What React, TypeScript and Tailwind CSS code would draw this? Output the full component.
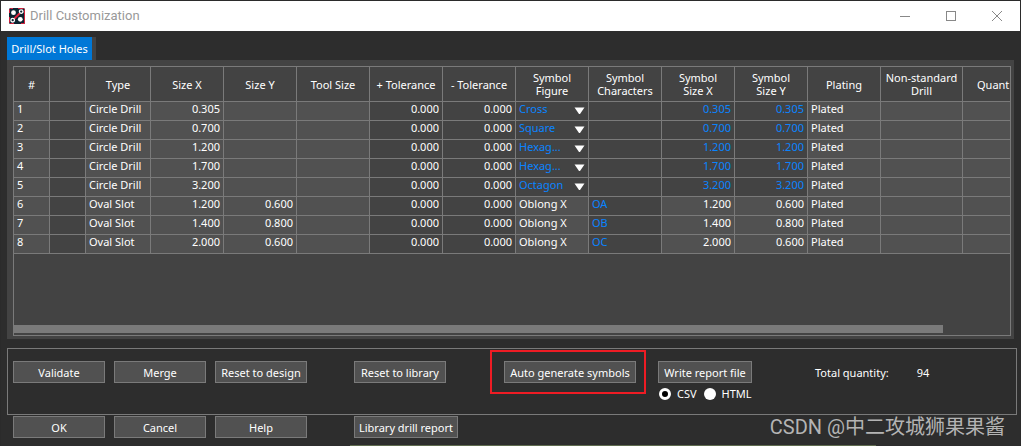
import React, { useState } from "react";

type Row = {
  type: string;
  sizeX: string;
  sizeY: string;
  figure: string;
  chars: string;
  symX: string;
  symY: string;
  editable: boolean;
};

const rows: Row[] = [
  { type: "Circle Drill", sizeX: "0.305", sizeY: "", figure: "Cross", chars: "", symX: "0.305", symY: "0.305", editable: true },
  { type: "Circle Drill", sizeX: "0.700", sizeY: "", figure: "Square", chars: "", symX: "0.700", symY: "0.700", editable: true },
  { type: "Circle Drill", sizeX: "1.200", sizeY: "", figure: "Hexag...", chars: "", symX: "1.200", symY: "1.200", editable: true },
  { type: "Circle Drill", sizeX: "1.700", sizeY: "", figure: "Hexag...", chars: "", symX: "1.700", symY: "1.700", editable: true },
  { type: "Circle Drill", sizeX: "3.200", sizeY: "", figure: "Octagon", chars: "", symX: "3.200", symY: "3.200", editable: true },
  { type: "Oval Slot", sizeX: "1.200", sizeY: "0.600", figure: "Oblong X", chars: "OA", symX: "1.200", symY: "0.600", editable: false },
  { type: "Oval Slot", sizeX: "1.400", sizeY: "0.800", figure: "Oblong X", chars: "OB", symX: "1.400", symY: "0.800", editable: false },
  { type: "Oval Slot", sizeX: "2.000", sizeY: "0.600", figure: "Oblong X", chars: "OC", symX: "2.000", symY: "0.600", editable: false },
];

const headers = [
  "#", "", "Type", "Size X", "Size Y", "Tool Size", "+ Tolerance", "- Tolerance",
  "Symbol\nFigure", "Symbol\nCharacters", "Symbol\nSize X", "Symbol\nSize Y", "Plating", "Non-standard\nDrill",
];

function Cell({ children, right, locked, blue }: { children?: React.ReactNode; right?: boolean; locked?: boolean; blue?: boolean }) {
  return (
    <td
      className={`h-[19px] overflow-hidden border-r border-b border-[#7a7a7a] px-[3px] pt-0 pb-1 leading-[14px] whitespace-nowrap last:border-r-0 ${
        right ? "text-right" : "text-left"
      } ${locked ? "bg-[#515151]" : "bg-[#434343]"} ${blue ? "text-[#0a84ff]" : "text-white"}`}
    >
      {children}
    </td>
  );
}

function FigureSelect({ value, index }: { value: string; index: number }) {
  return (
    <div className="relative">
      <select
        aria-label={`Symbol figure ${index}`}
        defaultValue={value}
        className="block h-[14px] w-full appearance-none bg-transparent p-0 leading-[14px] text-[#0a84ff] outline-none"
      >
        <option>{value}</option>
      </select>
      <svg className="pointer-events-none absolute top-[5px] right-0 h-[7px] w-[11px]" viewBox="0 0 11 7">
        <path d="M0.5 0.5H10.5L6 7H5Z" fill="#fff" />
      </svg>
    </div>
  );
}

function Button({ children, width = "w-[92px]" }: { children: React.ReactNode; width?: string }) {
  return (
    <button
      type="button"
      className={`h-[22px] ${width} shrink-0 border border-[#7a7a7a] bg-[#515151] pt-[2px] text-center leading-4 whitespace-nowrap text-white`}
    >
      {children}
    </button>
  );
}

function Radio({ label, checked, onChange }: { label: string; checked: boolean; onChange: () => void }) {
  return (
    <label className="flex items-center gap-[6px]">
      <input
        type="radio"
        name="format"
        checked={checked}
        onChange={onChange}
        className="size-3 appearance-none rounded-full border-0 bg-white checked:border-3 checked:border-white checked:bg-black"
      />
      {label}
    </label>
  );
}

function AppIcon() {
  return (
    <svg className="size-4" viewBox="0 0 16 16">
      <rect width="16" height="16" rx="1.5" fill="#0c2431" />
      <path d="M9 .5H14.5L15.5 1.5V15.5H12M.5 9V14.5L1.5 15.5H5M.5 5V1.5L1.5 .5H4" stroke="#d01f3c" fill="none" />
      <path d="M11 5L5 11" stroke="#e3203a" strokeWidth="1.8" />
      <circle cx="4.5" cy="4.7" r="2.4" fill="#fff" />
      <circle cx="11.3" cy="11.3" r="2.4" fill="#fff" />
      <circle cx="12.2" cy="3.6" r="1.8" fill="#0c2431" stroke="#fff" strokeWidth="1.3" />
      <circle cx="3.7" cy="12.2" r="1.8" fill="#0c2431" stroke="#fff" strokeWidth="1.3" />
    </svg>
  );
}

export default function App() {
  const [format, setFormat] = useState("CSV");
  return (
    <div className="relative flex min-h-screen flex-col border-x border-t border-[#2b2b2b] bg-[#2d2d2d] font-['Noto_Sans','Noto_Sans_CJK_SC',sans-serif] text-[11px] leading-4 text-white">
      <header className="flex h-[30px] shrink-0 items-center bg-white pl-2">
        <AppIcon />
        <h1 className="ml-[5px] flex-1 font-['Roboto',sans-serif] text-[13px] leading-5 text-[#999]">Drill Customization</h1>
        <div className="flex h-full text-[#888]">
          <button type="button" aria-label="Minimize" className="flex w-[46px] items-center justify-center">
            <svg className="size-[10px]" viewBox="0 0 10 10"><path d="M0 5.5H10" stroke="currentColor" /></svg>
          </button>
          <button type="button" aria-label="Maximize" className="flex w-[46px] items-center justify-center">
            <svg className="size-[10px]" viewBox="0 0 10 10"><rect x=".5" y=".5" width="9" height="9" fill="none" stroke="currentColor" /></svg>
          </button>
          <button type="button" aria-label="Close" className="flex w-[46px] items-center justify-center">
            <svg className="size-[10px]" viewBox="0 0 10 10"><path d="M0 0L10 10M10 0L0 10" stroke="currentColor" /></svg>
          </button>
        </div>
      </header>

      <main className="flex flex-col pt-[6px] pr-[3px] pl-[6px]">
        <div className="flex">
          <button type="button" className="h-[23px] w-[85px] bg-[#0078d7] text-center whitespace-nowrap">Drill/Slot Holes</button>
          <span className="w-1 bg-[#434343]" />
        </div>

        <section className="mr-[3px] bg-[#434343] p-[6px] pr-[3px] pb-[3px]">
          <div className="flex h-[270px] flex-col overflow-hidden border border-[#7a7a7a]">
            <table className="w-full table-fixed border-separate border-spacing-0">
              <colgroup>
                <col className="w-[36px]" />
                <col className="w-[36px]" />
                <col className="w-[65px]" />
                <col className="w-[73px]" />
                <col className="w-[73px]" />
                <col className="w-[73px]" />
                <col className="w-[73px]" />
                <col className="w-[73px]" />
                <col className="w-[73px]" />
                <col className="w-[73px]" />
                <col className="w-[73px]" />
                <col className="w-[73px]" />
                <col className="w-[73px]" />
                <col className="w-[82px]" />
                <col />
              </colgroup>
              <thead>
                <tr>
                  {headers.map((h, i) => (
                    <th key={i} className="h-[35px] border-r border-b border-[#7a7a7a] p-0 text-center leading-[13px] font-normal whitespace-pre">
                      {h}
                    </th>
                  ))}
                  <th className="h-[35px] border-b border-[#7a7a7a] p-0 pl-[14px] text-left leading-[13px] font-normal">Quant</th>
                </tr>
              </thead>
              <tbody>
                {rows.map((r, i) => (
                  <tr key={i}>
                    <Cell locked>{i + 1}</Cell>
                    <Cell />
                    <Cell locked>{r.type}</Cell>
                    <Cell locked right>{r.sizeX}</Cell>
                    <Cell locked right>{r.sizeY}</Cell>
                    <Cell locked />
                    <Cell right>0.000</Cell>
                    <Cell right>0.000</Cell>
                    <Cell locked={!r.editable}>{r.editable ? <FigureSelect value={r.figure} index={i + 1} /> : r.figure}</Cell>
                    <Cell blue>{r.chars}</Cell>
                    <Cell right locked={!r.editable} blue={r.editable}>{r.symX}</Cell>
                    <Cell right locked={!r.editable} blue={r.editable}>{r.symY}</Cell>
                    <Cell locked>Plated</Cell>
                    <Cell locked />
                    <Cell locked />
                  </tr>
                ))}
              </tbody>
            </table>
            <div className="mt-auto mr-[67px] mb-[2px] h-2 bg-[#7a7a7a]" />
          </div>
        </section>

        <section className="mt-[9px] flex h-[67px] items-start border border-[#7a7a7a] pt-3 pl-[5px]">
          <div className="flex gap-[9px]">
            <Button>Validate</Button>
            <Button>Merge</Button>
            <Button>Reset to design</Button>
          </div>
          <div className="ml-[47px]">
            <Button>Reset to library</Button>
          </div>
          <div className="relative ml-[58px]">
            <Button width="w-[132px]">Auto generate symbols</Button>
            <div className="pointer-events-none absolute -top-[11px] -right-[10px] -left-[14px] h-11 border-2 border-[#ee1c24]" />
          </div>
          <div className="ml-[22px] flex flex-col gap-[3px]">
            <Button width="w-[94px]">Write report file</Button>
            <div className="flex gap-[7px] pl-px">
              <Radio label="CSV" checked={format === "CSV"} onChange={() => setFormat("CSV")} />
              <Radio label="HTML" checked={format === "HTML"} onChange={() => setFormat("HTML")} />
            </div>
          </div>
          <div className="ml-[63px] flex gap-7 pt-1 whitespace-nowrap">
            <span>Total quantity:</span>
            <span>94</span>
          </div>
        </section>

        <footer className="mt-px flex pl-[6px]">
          <div className="flex gap-[9px]">
            <Button>OK</Button>
            <Button>Cancel</Button>
            <Button>Help</Button>
          </div>
          <div className="ml-[47px]">
            <Button width="w-[104px]">Library drill report</Button>
          </div>
        </footer>
      </main>

      <div className="absolute right-[15px] bottom-[5px] font-['Roboto','Noto_Sans_CJK_SC',sans-serif] text-[20px] leading-7 whitespace-nowrap text-[#b4b4b4]">
        CSDN @中二攻城狮果果酱
      </div>
      <div className="absolute bottom-0 left-[349px] h-px w-[526px] bg-[#5f6b4f]" />
    </div>
  );
}
